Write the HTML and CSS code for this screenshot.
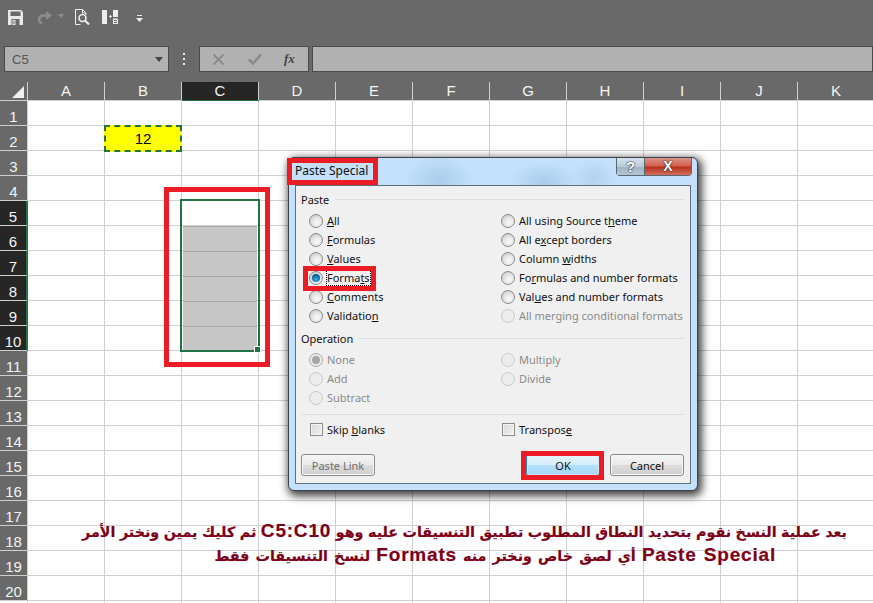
FILE: index.html
```html
<!DOCTYPE html>
<html lang="en">
<head>
    <meta charset="UTF-8">
    <meta name="viewport" content="width=device-width, initial-scale=1.0">
    <title>Paste Special</title>
    <link rel="stylesheet" href="styles.css">
</head>
<body>
    <div class="app">
        <!-- Quick access toolbar -->
        <div class="toolbar">
            <svg class="tool tool-save" width="15" height="15" viewBox="0 0 15 15"><path fill="#e8e8e8" d="M0 0h13l2 2v13H0z"/><path fill="#696969" d="M2.500 1.500h10v4.500h-10zM3.500 9h8v6h-8z"/><path fill="#e8e8e8" d="M4.500 10h3v5h-3z"/><path fill="#696969" d="M5.500 11h1v3h-1z"/></svg>
            <svg class="tool tool-redo" width="15" height="13" viewBox="0 0 15 13"><path fill="none" stroke="#8c8c8c" stroke-width="2.500" d="M5 12.500C1 10.500 1 5 6 4.500h7"/><path fill="#8c8c8c" d="M9 0l6 4.500-6 4.500z"/></svg>
            <svg class="tool tool-caret" width="6" height="4" viewBox="0 0 6 4"><path fill="#8c8c8c" d="M0 0h6L3 4z"/></svg>
            <svg class="tool tool-preview" width="15" height="16" viewBox="0 0 15 16"><path fill="none" stroke="#eee" d="M.5 15.500V.5h7l3.500 3.500v2M7.500.5V4H11M.5 15.500h5"/><circle cx="7.500" cy="9" r="3.500" fill="none" stroke="#eee" stroke-width="1.600"/><path stroke="#eee" stroke-width="2" d="M10 11.500l4 4"/></svg>
            <svg class="tool tool-split" width="17" height="14" viewBox="0 0 17 14"><path fill="#eee" d="M0 0h5v14H0zM11 0h5v7h-5zM11 8.500h5V14h-5z"/><path fill="#696969" d="M12 10h3v1h-3zM12 12h3v1h-3z"/><path fill="#eee" d="M7 6h3v1H7zM8 5h1v3H8z"/></svg>
            <svg class="tool tool-more" width="7" height="7" viewBox="0 0 7 7"><path fill="#eee" d="M1 0h5v1H1zM0 3h7L3.500 7z"/></svg>
        </div>

        <!-- Name box and formula bar -->
        <div class="formula-row">
            <div class="name-box"><span>C5</span><i class="name-caret"></i></div>
            <div class="grip"><i></i><i></i><i></i></div>
            <div class="formula-buttons">
                <svg width="13" height="13" viewBox="0 0 13 13"><path stroke="#8a8a8a" stroke-width="1.800" d="M1.500 1.500l10 10M11.500 1.500l-10 10"/></svg>
                <svg width="14" height="12" viewBox="0 0 14 12"><path fill="none" stroke="#8a8a8a" stroke-width="2.600" d="M1 6.500l4 4 8-9"/></svg>
                <span class="fx">fx</span>
            </div>
            <div class="formula-input"></div>
        </div>

        <!-- Column headers -->
        <div class="col-headers">
            <div class="corner"><i></i></div>
            <div class="col-head">A</div>
            <div class="col-head">B</div>
            <div class="col-head col-active">C</div>
            <div class="col-head">D</div>
            <div class="col-head">E</div>
            <div class="col-head">F</div>
            <div class="col-head">G</div>
            <div class="col-head">H</div>
            <div class="col-head">I</div>
            <div class="col-head">J</div>
            <div class="col-head">K</div>
        </div>

        <!-- Cells -->
        <div class="sheet">
            <div class="row-head">1</div>
            <div class="row-head">2</div>
            <div class="row-head">3</div>
            <div class="row-head">4</div>
            <div class="row-head row-active">5</div>
            <div class="row-head row-active">6</div>
            <div class="row-head row-active">7</div>
            <div class="row-head row-active">8</div>
            <div class="row-head row-active">9</div>
            <div class="row-head row-active">10</div>
            <div class="row-head">11</div>
            <div class="row-head">12</div>
            <div class="row-head">13</div>
            <div class="row-head">14</div>
            <div class="row-head">15</div>
            <div class="row-head">16</div>
            <div class="row-head">17</div>
            <div class="row-head">18</div>
            <div class="row-head">19</div>
            <div class="row-head">20</div>
            <div class="cell-copied">12</div>
            <div class="cell-range"></div>
        </div>

        <div class="selection"><i class="fill-handle"></i></div>

        <!-- Paste Special dialog -->
        <div class="dialog">
            <div class="title-bar">
                <span class="title-text">Paste Special</span>
                <div class="title-buttons">
                    <span class="btn-help">?</span>
                    <span class="btn-close">X</span>
                </div>
            </div>
            <div class="dialog-body">
                <div class="legend legend-paste"><span>Paste</span><i></i></div>
                <div class="options">
                    <label class="option"><i class="radio"></i><span><u>A</u>ll</span></label>
                    <label class="option"><i class="radio"></i><span>All using Source t<u>h</u>eme</span></label>
                    <label class="option"><i class="radio"></i><span><u>F</u>ormulas</span></label>
                    <label class="option"><i class="radio"></i><span>All e<u>x</u>cept borders</span></label>
                    <label class="option"><i class="radio"></i><span><u>V</u>alues</span></label>
                    <label class="option"><i class="radio"></i><span>Column <u>w</u>idths</span></label>
                    <label class="option"><i class="radio radio-on"></i><span class="focused">Forma<u>t</u>s</span></label>
                    <label class="option"><i class="radio"></i><span>Fo<u>r</u>mulas and number formats</span></label>
                    <label class="option"><i class="radio"></i><span><u>C</u>omments</span></label>
                    <label class="option"><i class="radio"></i><span>Val<u>u</u>es and number formats</span></label>
                    <label class="option"><i class="radio"></i><span>Validatio<u>n</u></span></label>
                    <label class="option off"><i class="radio"></i><span>All merging conditional formats</span></label>
                </div>
                <div class="legend legend-op"><span>Operation</span><i></i></div>
                <div class="options">
                    <label class="option off"><i class="radio radio-dot"></i><span>None</span></label>
                    <label class="option off"><i class="radio"></i><span>Multiply</span></label>
                    <label class="option off"><i class="radio"></i><span>Add</span></label>
                    <label class="option off"><i class="radio"></i><span>Divide</span></label>
                    <label class="option off"><i class="radio"></i><span>Subtract</span></label>
                </div>
                <div class="separator"></div>
                <div class="options">
                    <label class="option"><i class="check"></i><span>Skip <u>b</u>lanks</span></label>
                    <label class="option"><i class="check"></i><span>Transpos<u>e</u></span></label>
                </div>
                <div class="dialog-footer">
                    <button class="btn" disabled>Paste Link</button>
                    <div class="footer-right">
                        <button class="btn btn-default">OK</button>
                        <button class="btn">Cancel</button>
                    </div>
                </div>
            </div>
        </div>

        <!-- Red highlight frames -->
        <div class="mark mark-range"></div>
        <div class="mark mark-title"></div>
        <div class="mark mark-formats"></div>
        <div class="mark mark-ok"></div>

        <!-- Caption -->
        <div class="caption" dir="rtl">
            <p class="caption-one">بعد عملية النسخ نقوم بتحديد النطاق المطلوب تطبيق التنسيقات عليه وهو <span class="latin">C5:C10</span> ثم كليك يمين ونختر الأمر</p>
            <p class="caption-two"><span class="latin">Paste Special</span> أي لصق خاص ونختر منه <span class="latin">Formats</span> لنسخ التنسيقات فقط</p>
        </div>
    </div>
</body>
</html>
```

FILE: styles.css
```css
* {
    margin: 0;
    padding: 0;
    box-sizing: border-box;
}

body {
    font-family: "Liberation Sans", Arial, sans-serif;
    background: #696969;
    overflow: hidden;
    height: 100vh;
}

.app {
    position: relative;
    width: 873px;
    height: 603px;
    overflow: hidden;
}

/* Toolbar */
.toolbar {
    display: flex;
    align-items: center;
    height: 46px;
    padding: 0 0 12px 8px;
}

.tool {
    flex: none;
    display: block;
}

.tool-redo { margin-left: 14px; }
.tool-caret { margin-left: 6px; margin-top: -2px; }
.tool-preview { margin-left: 11px; }
.tool-split { margin-left: 12px; }
.tool-more { margin-left: 17px; margin-top: 2px; }

/* Formula row */
.formula-row {
    display: flex;
    height: 26px;
    padding-left: 4px;
}

.name-box {
    display: flex;
    align-items: center;
    justify-content: space-between;
    width: 165px;
    padding: 0 5px 0 7px;
    background: #b1b1b1;
    border: 1px solid #4a4a4a;
    color: #555;
    font-size: 13px;
}

.name-caret {
    width: 0;
    height: 0;
    border-left: 4px solid transparent;
    border-right: 4px solid transparent;
    border-top: 5px solid #444;
}

.grip {
    display: flex;
    flex-direction: column;
    align-items: center;
    justify-content: center;
    gap: 3px;
    width: 30px;
}

.grip i {
    width: 2px;
    height: 2px;
    background: #eee;
}

.formula-buttons {
    display: flex;
    align-items: center;
    width: 110px;
    padding-left: 12px;
    gap: 23px;
    background: #b1b1b1;
    border: 1px solid #4a4a4a;
}

.fx {
    font-family: "Liberation Serif", serif;
    font-style: italic;
    font-weight: bold;
    font-size: 13px;
    color: #444;
    margin-left: -1px;
}

.formula-input {
    flex: 1;
    margin-left: 3px;
    background: #b1b1b1;
    border: 1px solid #4a4a4a;
}

/* Column headers */
.col-headers {
    display: grid;
    grid-template-columns: 28px repeat(11, 77px);
    height: 19px;
    margin-top: 10px;
    border-bottom: 1px solid #cfcfcf;
}

.corner {
    position: relative;
    border-right: 1px solid #cfcfcf;
}

.corner i {
    position: absolute;
    right: 3px;
    bottom: 2px;
    border-left: 12px solid transparent;
    border-bottom: 12px solid #f0f0f0;
}

.col-head {
    color: #f4f4f4;
    font-size: 15px;
    line-height: 18px;
    text-align: center;
    border-right: 1px solid #cfcfcf;
}

.col-active {
    background: #262626;
    box-shadow: 0 1px 0 #217346;
}

/* Sheet */
.sheet {
    display: grid;
    grid-template-columns: 28px repeat(11, 77px);
    grid-auto-rows: 25px;
    height: 502px;
    background-color: #fff;
    background-image:
        linear-gradient(to right, transparent 76px, #d0d0d0 76px),
        linear-gradient(to bottom, transparent 24px, #d0d0d0 24px);
    background-size: 77px 100%, 100% 25px;
    background-position: 28px 0, 0 0;
}

.row-head {
    grid-column: 1;
    color: #f4f4f4;
    background: #696969;
    font-size: 15px;
    line-height: 32px;
    text-align: center;
    border-bottom: 1px solid #cfcfcf;
    border-right: 1px solid #cfcfcf;
}

.row-active {
    background: #262626;
    border-right: 2px solid #217346;
}

.cell-copied {
    grid-column: 3;
    grid-row: 2;
    margin: -1px 0 -1px -1px;
    padding-top: 1px;
    background: #ffff00;
    border: 2px dashed #217346;
    color: #000;
    font-size: 15px;
    line-height: 21px;
    text-align: center;
}

.cell-range {
    grid-column: 4;
    grid-row: 6 / 11;
    margin: 0 2px 1px 1px;
    background: repeating-linear-gradient(#a6a6a6 0, #a6a6a6 1px, #c6c6c6 1px, #c6c6c6 25px);
}

.selection {
    position: absolute;
    left: 180px;
    top: 199px;
    width: 80px;
    height: 153px;
    border: 2px solid #217346;
}

.fill-handle {
    position: absolute;
    right: -3px;
    bottom: -3px;
    width: 7px;
    height: 7px;
    background: #217346;
    border: 1px solid #fff;
}

/* Dialog */
.dialog {
    position: absolute;
    left: 288px;
    top: 157px;
    width: 410px;
    height: 334px;
    display: flex;
    flex-direction: column;
    padding: 0 6px 6px;
    border: 1px solid #39424d;
    border-radius: 6px;
    background:
        radial-gradient(ellipse 34px 24px at 150px 22px, #a9cdea 0, transparent 100%),
        radial-gradient(ellipse 34px 20px at 255px 24px, #a9cdea 0, transparent 100%),
        radial-gradient(ellipse 22px 18px at 305px 20px, #b2d2ee 0, transparent 100%),
        #c4e0fa;
    box-shadow: 2px 3px 9px 2px rgba(0, 0, 0, 0.75);
    color: #111;
    font-family: "Noto Sans", "Open Sans", sans-serif;
    font-size: 11px;
}

.title-bar {
    display: flex;
    justify-content: space-between;
    height: 27px;
}

.title-text {
    font-size: 12px;
    line-height: 27px;
    margin-top: -1px;
}

.title-buttons {
    display: flex;
    height: 18px;
    margin-right: -1px;
    font-family: "Liberation Sans", sans-serif;
    font-weight: bold;
    color: #fff;
    text-align: center;
    border: 1px solid #5b6770;
    border-top: none;
    border-radius: 0 0 4px 4px;
}

.btn-help {
    width: 27px;
    font-size: 15px;
    line-height: 17px;
    background: linear-gradient(#d6e3ee, #b9cbdb 50%, #9fb4c6 55%, #b5c6d4);
    text-shadow: 0 0 2px #222, 0 0 1px #222;
}

.btn-close {
    width: 47px;
    font-size: 14px;
    line-height: 17px;
    border-left: 1px solid #5b6770;
    background: linear-gradient(#dc9489, #d2604f 45%, #b8321f 55%, #d2705f);
    text-shadow: 0 0 2px #222, 0 0 1px #222;
}

.dialog-body {
    flex: 1;
    padding: 5px 6px 0 5px;
    background: #f0f0f0;
    border: 1px solid #5f6e7c;
}

.legend {
    display: flex;
    align-items: center;
    gap: 6px;
    height: 16px;
}

.legend i {
    flex: 1;
    height: 1px;
    background: #d9dfe5;
}

.legend-op {
    margin-top: 5px;
}

.options {
    display: grid;
    grid-template-columns: 192px 1fr;
    grid-auto-rows: 19px;
    margin-top: 4px;
    padding-left: 8px;
}

.legend-op + .options {
    margin-top: 4px;
}

.option {
    display: flex;
    align-items: center;
    gap: 4px;
    white-space: nowrap;
}

.off {
    color: #8a8a8a;
}

.radio {
    position: relative;
    flex: none;
    width: 14px;
    height: 14px;
    border: 1px solid #8b8b8b;
    border-radius: 50%;
    background: radial-gradient(circle at 60% 65%, #fbfbfb 0, #e6e6e6 45%, #bcbcbc 100%);
}

.off .radio {
    border-color: #c8c8c8;
    background: #ececec;
}

.radio-on::after {
    content: "";
    position: absolute;
    left: 2px;
    top: 2px;
    width: 8px;
    height: 8px;
    border-radius: 50%;
    background: radial-gradient(circle at 50% 70%, #3fb2e4 0, #0c6ea8 55%, #0a3c66 100%);
}

.off .radio-dot {
    border-color: #a8a8a8;
}

.radio-dot::after {
    content: "";
    position: absolute;
    left: 2px;
    top: 2px;
    width: 8px;
    height: 8px;
    border-radius: 50%;
    background: #a4a4a4;
}

.focused {
    outline: 1px dotted #000;
}

.check {
    flex: none;
    width: 13px;
    height: 13px;
    margin-left: 1px;
    border: 1px solid #8b8b8b;
    background: linear-gradient(135deg, #d8d8d8, #f4f4f4);
    box-shadow: inset 0 0 0 1px #f4f4f4;
}

.separator {
    height: 1px;
    margin-top: 7px;
    margin-bottom: 5px;
    background: #d9dfe5;
}

.separator + .options {
    margin-top: 0;
}

.dialog-footer {
    display: flex;
    justify-content: space-between;
    margin-top: 15px;
}

.footer-right {
    display: flex;
    gap: 10px;
}

.btn {
    width: 74px;
    height: 22px;
    font-family: inherit;
    font-size: 11px;
    color: #111;
    border: 1px solid #8a8a8a;
    border-radius: 3px;
    background: linear-gradient(#f4f4f4, #ebebeb 48%, #dcdcdc 52%, #cfcfcf);
    box-shadow: inset 0 0 0 1px #f7f7f7;
}

.btn:disabled {
    color: #6f6f6f;
}

.btn-default {
    border-color: #3c7fb1;
    background: linear-gradient(#e9f6fd, #d5eefb 48%, #b4e0f9 52%, #a4d6f4);
    box-shadow: inset 0 0 0 1px #c7e9fb;
}

/* Highlight frames */
.mark {
    position: absolute;
    border: 5px solid #ed1c24;
}

.mark-range { left: 164px; top: 187px; width: 106px; height: 180px; }
.mark-title { left: 287px; top: 158px; width: 91px; height: 27px; }
.mark-formats { left: 303px; top: 266px; width: 73px; height: 25px; }
.mark-ok { left: 521px; top: 451px; width: 83px; height: 29px; }

/* Caption */
.caption {
    position: absolute;
    left: 60px;
    top: 519px;
    width: 800px;
    font-family: "DejaVu Sans", sans-serif;
    font-weight: bold;
    font-size: 14.300px;
    line-height: 23px;
    color: #7d0016;
    -webkit-text-stroke: 0.200px #7d0016;
    white-space: nowrap;
}

.caption-one {
    height: 24px;
    padding-right: 13px;
    word-spacing: -0.450px;
}

.caption-two {
    height: 24px;
    padding-right: 84px;
    word-spacing: 1.200px;
}

.latin {
    font-family: "Liberation Sans", sans-serif;
    font-size: 19px;
    letter-spacing: 0.800px;
}
```
